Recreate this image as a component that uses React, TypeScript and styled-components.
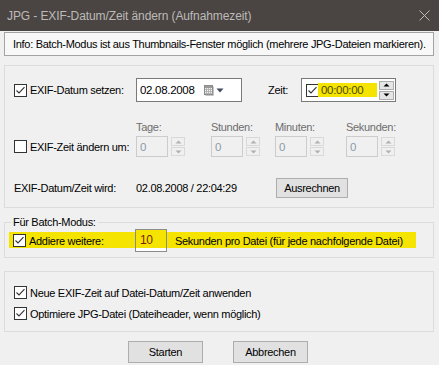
import React from 'react';
import styled, { createGlobalStyle } from 'styled-components';

const YELLOW = '#f5e400';

const GlobalStyle = createGlobalStyle`
  html, body {
    margin: 0;
    padding: 0;
    background: #f0f0f0;
  }
  body {
    font-family: "Liberation Sans", Arial, sans-serif;
    font-size: 11px;
    letter-spacing: -0.3px;
    color: #000;
  }
  * {
    box-sizing: border-box;
  }
`;

const Check = ({ checked = false }: { checked?: boolean }) => (
  <CheckBox>
    {checked && (
      <svg width="11" height="11" viewBox="0 0 11 11">
        <path d="M1.5 5.5 L4 8 L9.5 2.2" fill="none" stroke="#333" strokeWidth="1.1" />
      </svg>
    )}
  </CheckBox>
);

const Arrow = ({ up, color }: { up?: boolean; color: string }) => (
  <svg width="7" height="4" viewBox="0 0 7 4">
    <path d={up ? 'M0.5 3.5 L3.5 0.5 L6.5 3.5 Z' : 'M0.5 0.5 L3.5 3.5 L6.5 0.5 Z'} fill={color} />
  </svg>
);

const Spinner = ({ disabled }: { disabled?: boolean }) => (
  <SpinButtons $disabled={disabled}>
    <SpinHalf $disabled={disabled}>
      <Arrow up color={disabled ? '#b0b0b0' : '#000'} />
    </SpinHalf>
    <SpinHalf $disabled={disabled}>
      <Arrow color={disabled ? '#b0b0b0' : '#000'} />
    </SpinHalf>
  </SpinButtons>
);

const SpinColumn = ({ label, width }: { label: string; width?: number }) => (
  <SpinCol style={width ? { width } : undefined}>
    <DisabledLabel>{label}</DisabledLabel>
    <SpinField>
      <DisabledBox>0</DisabledBox>
      <Spinner disabled />
    </SpinField>
  </SpinCol>
);

// kleines Kalender-Symbol im Datumsfeld
const CalendarIcon = () => (
  <svg width="10" height="11" viewBox="0 0 10 11">
    <rect x="0.5" y="0.5" width="8" height="9" fill="#f4f4f4" stroke="#8c8c8c" />
    <rect x="1" y="1" width="7" height="2" fill="#9a9a9a" />
    <path d="M1 4.5 H8.5 M1 6.5 H8.5 M1 8.5 H8.5 M2.5 3 V9.5 M4.5 3 V9.5 M6.5 3 V9.5" stroke="#a8a8a8" strokeWidth="0.8" />
    <path d="M9.5 1.5 V10.5 H1.5" fill="none" stroke="#c4c4c4" />
  </svg>
);

const App = () => {
  return (
    <Window>
      <GlobalStyle />
      <TitleBar>
        <span>JPG - EXIF-Datum/Zeit ändern (Aufnahmezeit)</span>
        <svg width="11" height="11" viewBox="0 0 11 11">
          <path d="M0.5 0.5 L10.5 10.5 M10.5 0.5 L0.5 10.5" stroke="#bdbab8" strokeWidth="1" />
        </svg>
      </TitleBar>

      <Body>
        <InfoBox>
          Info: Batch-Modus ist aus Thumbnails-Fenster möglich (mehrere JPG-Dateien markieren).
        </InfoBox>

        <MainGroup>
          <Row>
            <LabelCol>
              <Check checked />
              <span>EXIF-Datum setzen:</span>
            </LabelCol>
            <DateBox>
              <span>02.08.2008</span>
              <DateIcons>
                <CalendarIcon />
                <svg width="8" height="5" viewBox="0 0 8 5">
                  <path d="M0.5 0.5 L4 4.5 L7.5 0.5 Z" fill="#3f4b5e" />
                </svg>
              </DateIcons>
            </DateBox>
            <ZeitLabel>Zeit:</ZeitLabel>
            <TimeBox>
              <Check checked />
              <TimeText>00:00:00</TimeText>
              <Spinner />
            </TimeBox>
          </Row>

          <OffsetRow>
            <LabelCol>
              <Check />
              <span>EXIF-Zeit ändern um:</span>
            </LabelCol>
            <SpinColumn label="Tage:" width={75} />
            <SpinColumn label="Stunden:" width={64} />
            <SpinColumn label="Minuten:" width={71} />
            <SpinColumn label="Sekunden:" />
          </OffsetRow>

          <ResultRow>
            <LabelCol>
              <span>EXIF-Datum/Zeit wird:</span>
            </LabelCol>
            <ResultValue>02.08.2008 / 22:04:29</ResultValue>
            <Button $w={72} $h={20}>Ausrechnen</Button>
          </ResultRow>
        </MainGroup>

        <BatchGroup>
          <Legend>Für Batch-Modus:</Legend>
          <BatchRow>
            <LabelCol>
              <Check checked />
              <span>Addiere weitere:</span>
            </LabelCol>
            <SecondsBox>10</SecondsBox>
            <span>Sekunden pro Datei (für jede nachfolgende Datei)</span>
          </BatchRow>
        </BatchGroup>

        <OptionsGroup>
          <CheckRow>
            <Check checked />
            <span>Neue EXIF-Zeit auf Datei-Datum/Zeit anwenden</span>
          </CheckRow>
          <CheckRow>
            <Check checked />
            <span>Optimiere JPG-Datei (Dateiheader, wenn möglich)</span>
          </CheckRow>
        </OptionsGroup>

        <ButtonBar>
          <Button $w={75} $h={22}>Starten</Button>
          <Button $w={75} $h={22}>Abbrechen</Button>
        </ButtonBar>
      </Body>
    </Window>
  );
};

export default App;

const Window = styled.div`
  width: 439px;
  height: 365px;
  overflow: hidden;
  background: #f0f0f0;
`;

const TitleBar = styled.div`
  height: 31px;
  background: #4a4542;
  color: #bdbab8;
  font-size: 12px;
  letter-spacing: -0.1px;
  display: flex;
  align-items: center;
  justify-content: space-between;
  padding: 0 9px 0 7px;
`;

const Body = styled.div`
  padding: 1px 5px 0 4px;
`;

const InfoBox = styled.div`
  height: 24px;
  border: 1px solid #a3a3a3;
  background: #f8f8f8;
  display: flex;
  align-items: center;
  padding-left: 8px;
  white-space: nowrap;
`;

const MainGroup = styled.div`
  margin-top: 9px;
  height: 143px;
  border: 1px solid #dcdcdc;
  padding: 12px 0 0 9px;
`;

const Row = styled.div`
  display: flex;
  align-items: center;
  height: 24px;
`;

const OffsetRow = styled.div`
  display: flex;
  align-items: flex-end;
  margin-top: 18px;
`;

const ResultRow = styled.div`
  display: flex;
  align-items: center;
  height: 20px;
  margin-top: 21px;
`;

const LabelCol = styled.div`
  width: 122px;
  height: 21px;
  display: flex;
  align-items: center;
  gap: 3px;
  flex-shrink: 0;
  white-space: nowrap;
`;

const CheckBox = styled.div`
  width: 13px;
  height: 13px;
  border: 1px solid #333;
  background: #fff;
  flex-shrink: 0;
  display: flex;
  align-items: center;
  justify-content: center;
`;

const DateBox = styled.div`
  width: 106px;
  height: 24px;
  border: 1px solid #7a7a7a;
  background: #fff;
  display: flex;
  align-items: center;
  padding: 0 17px 0 3px;
  font-size: 11.5px;
`;

const DateIcons = styled.div`
  margin-left: auto;
  display: flex;
  align-items: center;
  gap: 2px;
`;

const ZeitLabel = styled.span`
  margin-left: 26px;
  width: 33px;
`;

const TimeBox = styled.div`
  width: 95px;
  height: 24px;
  border: 1px solid #7a7a7a;
  background: #fff;
  display: flex;
  align-items: center;
  padding-left: 4px;
`;

const TimeText = styled.span`
  width: 59px;
  height: 14px;
  margin-left: -1px;
  padding-left: 3px;
  background: ${YELLOW};
  color: #4d4a00;
  font-size: 11.5px;
  line-height: 14px;
`;

const SpinButtons = styled.div<{ $disabled?: boolean }>`
  display: flex;
  flex-direction: column;
  gap: 1px;
  width: ${(p) => (p.$disabled ? 14 : 15)}px;
  margin-left: ${(p) => (p.$disabled ? 3 : 2)}px;
`;

const SpinHalf = styled.div<{ $disabled?: boolean }>`
  height: 9px;
  border: 1px solid ${(p) => (p.$disabled ? '#d9d9d9' : '#adadad')};
  background: ${(p) => (p.$disabled ? '#f0f0f0' : '#e5e5e5')};
  display: flex;
  align-items: center;
  justify-content: center;
`;

const SpinCol = styled.div`
  display: flex;
  flex-direction: column;
  gap: 2px;
`;

const DisabledLabel = styled.span`
  color: #6d6d6d;
  height: 14px;
  line-height: 14px;
  white-space: nowrap;
`;

const SpinField = styled.div`
  display: flex;
  align-items: center;
  height: 21px;
`;

const DisabledBox = styled.div`
  width: 32px;
  height: 21px;
  border: 1px solid #cccccc;
  background: #f0f0f0;
  color: #8d9aab;
  display: flex;
  align-items: center;
  padding-left: 3px;
  font-size: 11.5px;
`;

const ResultValue = styled.span`
  width: 140px;
  white-space: nowrap;
`;

const Button = styled.div<{ $w: number; $h: number }>`
  width: ${(p) => p.$w}px;
  height: ${(p) => p.$h}px;
  background: #e1e1e1;
  border: 1px solid #adadad;
  display: flex;
  align-items: center;
  justify-content: center;
`;

const BatchGroup = styled.fieldset`
  margin: 7px 0 0;
  padding: 0;
  height: 43px;
  border: 1px solid #dcdcdc;
  min-width: 0;
`;

const Legend = styled.legend`
  margin-left: 6px;
  padding: 0 2px;
  height: 14px;
  line-height: 14px;
`;

const BatchRow = styled.div`
  margin-left: 4px;
  width: 407px;
  height: 23px;
  padding-left: 4px;
  display: flex;
  align-items: center;
  white-space: nowrap;
  background: linear-gradient(transparent 3px, ${YELLOW} 3px, ${YELLOW} 19px, transparent 19px);
`;

const SecondsBox = styled.div`
  width: 32px;
  height: 23px;
  margin-right: 8px;
  border: 1px solid #8c8c8c;
  background: linear-gradient(${YELLOW} 18px, #fff 18px);
  color: #7a1e00;
  font-size: 12px;
  padding: 3px 0 0 4px;
`;

const OptionsGroup = styled.div`
  margin-top: 13px;
  height: 61px;
  border: 1px solid #dcdcdc;
  padding: 12px 0 0 9px;
  display: flex;
  flex-direction: column;
  gap: 4px;
`;

const CheckRow = styled.div`
  display: flex;
  align-items: center;
  gap: 3px;
  height: 17px;
  white-space: nowrap;
`;

const ButtonBar = styled.div`
  margin-top: 9px;
  display: flex;
  justify-content: center;
  gap: 30px;
  padding-right: 2px;
`;
